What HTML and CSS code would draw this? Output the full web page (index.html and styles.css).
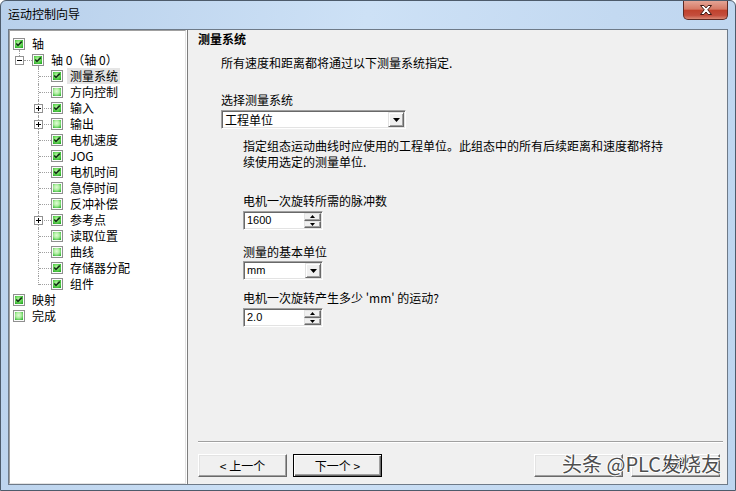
FILE: index.html
```html
<!DOCTYPE html>
<html lang="zh-CN">
<head>
<meta charset="utf-8">
<title>运动控制向导</title>
<link rel="stylesheet" href="styles.css">
</head>
<body>
<svg class="defs" aria-hidden="true">
  <defs>
    <radialGradient id="gOn" cx="45%" cy="40%" r="70%">
      <stop offset="0" stop-color="#c2f5ae"/>
      <stop offset="0.55" stop-color="#6ad95a"/>
      <stop offset="1" stop-color="#27aa27"/>
    </radialGradient>
    <radialGradient id="gOff" cx="45%" cy="40%" r="70%">
      <stop offset="0" stop-color="#e2fbd8"/>
      <stop offset="0.5" stop-color="#aeeea0"/>
      <stop offset="1" stop-color="#38b838"/>
    </radialGradient>
    <symbol id="cbOn" viewBox="0 0 12 12">
      <rect x=".5" y=".5" width="11" height="11" fill="#fbfbfb" stroke="#8f8f8f"/>
      <rect x="2" y="2" width="8" height="8" fill="url(#gOn)"/>
      <path d="M3.2 5.5 5 7.4 8.8 3.6" fill="none" stroke="#163418" stroke-width="1.6"/>
    </symbol>
    <symbol id="cbOff" viewBox="0 0 12 12">
      <rect x=".5" y=".5" width="11" height="11" fill="#fbfbfb" stroke="#8f8f8f"/>
      <rect x="2" y="2" width="8" height="8" fill="url(#gOff)"/>
    </symbol>
    <symbol id="expMinus" viewBox="0 0 9 9">
      <rect x=".5" y=".5" width="8" height="8" fill="#fff" stroke="#919191"/>
      <path d="M2 4.5h5" stroke="#000"/>
    </symbol>
    <symbol id="expPlus" viewBox="0 0 9 9">
      <rect x=".5" y=".5" width="8" height="8" fill="#fff" stroke="#919191"/>
      <path d="M2 4.5h5M4.5 2v5" stroke="#000"/>
    </symbol>
    <symbol id="triDown" viewBox="0 0 7 4">
      <path d="M0 0h7L3.5 4z" fill="#000"/>
    </symbol>
    <symbol id="triUpS" viewBox="0 0 5 3">
      <path d="M2.5 0 5 3H0z" fill="#000"/>
    </symbol>
    <symbol id="triDownS" viewBox="0 0 5 3">
      <path d="M0 0h5L2.5 3z" fill="#000"/>
    </symbol>
  </defs>
</svg>

<div class="window">
  <header class="titlebar">
    <div class="title">运动控制向导</div>
    <div class="close">
      <svg width="12" height="10" viewBox="0 0 12 10"><path d="M.5.5h3.4l2.1 2.4L8.1.5h3.4L7.8 4.8l3.7 4.7H8.1L6 7 3.9 9.5H.5l3.7-4.7z" fill="#fff" stroke="#3f1812" stroke-width="1" stroke-linejoin="round"/></svg>
    </div>
  </header>

  <div class="client">
    <nav class="tree-wrap">
      <ul class="tree">
        <li class="row l0 parent"><svg class="cb"><use href="#cbOn"/></svg><span class="lbl">轴</span></li>
        <li class="row l1"><svg class="slot"><use href="#expMinus"/></svg><svg class="cb"><use href="#cbOn"/></svg><span class="lbl">轴 0（轴 0）</span></li>
        <li class="row l2"><span class="slot"></span><svg class="cb"><use href="#cbOn"/></svg><span class="lbl sel">测量系统</span></li>
        <li class="row l2"><span class="slot"></span><svg class="cb"><use href="#cbOff"/></svg><span class="lbl">方向控制</span></li>
        <li class="row l2"><svg class="slot"><use href="#expPlus"/></svg><svg class="cb"><use href="#cbOn"/></svg><span class="lbl">输入</span></li>
        <li class="row l2"><svg class="slot"><use href="#expPlus"/></svg><svg class="cb"><use href="#cbOff"/></svg><span class="lbl">输出</span></li>
        <li class="row l2"><span class="slot"></span><svg class="cb"><use href="#cbOn"/></svg><span class="lbl">电机速度</span></li>
        <li class="row l2"><span class="slot"></span><svg class="cb"><use href="#cbOn"/></svg><span class="lbl">JOG</span></li>
        <li class="row l2"><span class="slot"></span><svg class="cb"><use href="#cbOn"/></svg><span class="lbl">电机时间</span></li>
        <li class="row l2"><span class="slot"></span><svg class="cb"><use href="#cbOff"/></svg><span class="lbl">急停时间</span></li>
        <li class="row l2"><span class="slot"></span><svg class="cb"><use href="#cbOff"/></svg><span class="lbl">反冲补偿</span></li>
        <li class="row l2"><svg class="slot"><use href="#expPlus"/></svg><svg class="cb"><use href="#cbOn"/></svg><span class="lbl">参考点</span></li>
        <li class="row l2"><span class="slot"></span><svg class="cb"><use href="#cbOff"/></svg><span class="lbl">读取位置</span></li>
        <li class="row l2"><span class="slot"></span><svg class="cb"><use href="#cbOff"/></svg><span class="lbl">曲线</span></li>
        <li class="row l2"><span class="slot"></span><svg class="cb"><use href="#cbOn"/></svg><span class="lbl">存储器分配</span></li>
        <li class="row l2 last"><span class="slot"></span><svg class="cb"><use href="#cbOn"/></svg><span class="lbl">组件</span></li>
        <li class="row l0"><svg class="cb"><use href="#cbOn"/></svg><span class="lbl">映射</span></li>
        <li class="row l0"><svg class="cb"><use href="#cbOff"/></svg><span class="lbl">完成</span></li>
      </ul>
    </nav>

    <main class="pane">
      <h1 class="hdr">测量系统</h1>
      <p class="intro">所有速度和距离都将通过以下测量系统指定.</p>

      <div class="lbl-sys">选择测量系统</div>
      <div class="combo combo-sys">
        <span class="val">工程单位</span>
        <span class="drop"><svg width="7" height="4"><use href="#triDown"/></svg></span>
      </div>

      <p class="desc">指定组态运动曲线时应使用的工程单位。此组态中的所有后续距离和速度都将持<br>续使用选定的测量单位.</p>

      <div class="flabel fl-pulse">电机一次旋转所需的脉冲数</div>
      <div class="spin">
        <span class="val num">1600</span>
        <span class="spinbtns">
          <span class="sb"><svg width="5" height="3"><use href="#triUpS"/></svg></span>
          <span class="sb"><svg width="5" height="3"><use href="#triDownS"/></svg></span>
        </span>
      </div>

      <div class="flabel fl-unit">测量的基本单位</div>
      <div class="combo combo-unit">
        <span class="val num">mm</span>
        <span class="drop"><svg width="7" height="4"><use href="#triDown"/></svg></span>
      </div>

      <div class="flabel fl-move">电机一次旋转产生多少 'mm' 的运动?</div>
      <div class="spin">
        <span class="val num">2.0</span>
        <span class="spinbtns">
          <span class="sb"><svg width="5" height="3"><use href="#triUpS"/></svg></span>
          <span class="sb"><svg width="5" height="3"><use href="#triDownS"/></svg></span>
        </span>
      </div>

      <div class="spacer"></div>
      <div class="sep"></div>

      <div class="btns">
        <button class="btn">&lt; 上一个</button>
        <button class="btn def">下一个 &gt;</button>
        <button class="btn right-first" aria-label="生成"></button>
        <button class="btn cancel">取消</button>
      </div>
    </main>
  </div>

  <div class="watermark">头条 @PLC发烧友</div>
</div>
</body>
</html>
```

FILE: styles.css
```css
* { box-sizing: border-box; }

html, body {
  margin: 0;
  padding: 0;
  background: #ffffff;
}

body {
  font: 12px/16px "Noto Sans CJK SC", "Noto Sans", sans-serif;
  color: #000;
}

.defs {
  position: absolute;
  width: 0;
  height: 0;
  overflow: hidden;
}

.window {
  position: relative;
  width: 736px;
  height: 491px;
  border: 1px solid #4d5b6b;
  border-radius: 6px 6px 0 0;
  background: linear-gradient(100deg, #b8d0eb 0%, #cde1f6 45%, #c3d9f1 75%, #bdd5ef 100%);
  display: flex;
  flex-direction: column;
  overflow: hidden;
}

.titlebar {
  height: 28px;
  flex: none;
  display: flex;
  align-items: flex-start;
  justify-content: space-between;
}

.title {
  margin: 5px 0 0 7px;
  font-size: 12px;
  line-height: 16px;
  color: #000;
}

.close {
  width: 45px;
  height: 19px;
  margin-right: 7px;
  border: 1px solid #5e2a24;
  border-top: none;
  border-radius: 0 0 5px 5px;
  background: linear-gradient(#e4a495 0%, #d67a66 45%, #c0422d 52%, #c44e3d 80%, #d98874 100%);
  display: flex;
  align-items: center;
  justify-content: center;
}

.client {
  flex: 1;
  min-height: 0;
  margin: 0 7px 5px 7px;
  border: 1px solid #6e7a88;
  display: flex;
}

/* ---------- tree ---------- */
.tree-wrap {
  width: 179px;
  flex: none;
  background: #fff;
  border-right: 1px solid #7d7d7d;
  display: flex;
}

.tree {
  flex: 1;
  margin: 0 1px 0 0;
  padding: 5px 0 0 0;
  list-style: none;
  border: 1px solid;
  border-color: #a0a0a0 #e3e3e3 #e3e3e3 #a0a0a0;
}

.row {
  position: relative;
  height: 16px;
  display: flex;
  align-items: center;
  white-space: nowrap;
}

.l0 { padding-left: 3px; }
.l1 { padding-left: 5px; }
.l2 { padding-left: 24px; }

.slot {
  width: 9px;
  height: 9px;
  flex: none;
  align-self: flex-start;
  margin: 4px 8px 0 0;
  position: relative;
  z-index: 1;
  display: block;
}

.cb {
  width: 12px;
  height: 12px;
  flex: none;
  display: block;
}

.lbl {
  margin-left: 4px;
  padding: 0 2px 0 3px;
  line-height: 16px;
}

.lbl.sel { background: #e5e5e5; }

/* connector lines */
.l0.parent::after {
  content: "";
  position: absolute;
  left: 9px;
  top: 14px;
  height: 6px;
  border-left: 1px dotted #a0a0a0;
}

.l1::before {
  content: "";
  position: absolute;
  left: 14px;
  top: 8px;
  width: 8px;
  border-top: 1px dotted #a0a0a0;
}

.l1::after {
  content: "";
  position: absolute;
  left: 28px;
  top: 14px;
  height: 2px;
  border-left: 1px dotted #a0a0a0;
}

.l2::before {
  content: "";
  position: absolute;
  left: 28px;
  top: 0;
  height: 16px;
  border-left: 1px dotted #a0a0a0;
}

.l2.last::before { height: 9px; }

.l2::after {
  content: "";
  position: absolute;
  left: 29px;
  top: 8px;
  width: 12px;
  border-top: 1px dotted #a0a0a0;
}

/* ---------- right pane ---------- */
.pane {
  flex: 1;
  min-width: 0;
  background: #f0f0f0;
  display: flex;
  flex-direction: column;
  padding: 1px 7px 7px 10px;
}

.hdr {
  margin: 0;
  font-size: 12px;
  font-weight: bold;
  line-height: 16px;
}

.intro {
  margin: 8px 0 0 23px;
}

.lbl-sys {
  margin: 21px 0 0 23px;
}

.combo,
.spin {
  height: 19px;
  display: flex;
  background: #fff;
  border: 1px solid;
  border-color: #a0a0a0 #ffffff #ffffff #a0a0a0;
  box-shadow: inset 1px 1px 0 #696969, inset -1px -1px 0 #e3e3e3;
  padding: 1px;
}

.combo-sys {
  width: 185px;
  margin: 2px 0 0 23px;
}

.val {
  flex: 1;
  line-height: 15px;
  padding-left: 2px;
  white-space: nowrap;
}

.num {
  font-family: "Liberation Sans", Arial, sans-serif;
  font-size: 11px;
}

.drop {
  width: 16px;
  height: 15px;
  flex: none;
  background: #f0f0f0;
  border: 1px solid;
  border-color: #e3e3e3 #696969 #696969 #e3e3e3;
  box-shadow: inset 1px 1px 0 #ffffff, inset -1px -1px 0 #a0a0a0;
  display: flex;
  align-items: center;
  justify-content: center;
}

.drop svg { display: block; }

.desc {
  margin: 9px 0 0 45px;
  white-space: nowrap;
}

.flabel {
  margin-left: 45px;
  white-space: nowrap;
}

.fl-pulse { margin-top: 23px; }
.fl-unit { margin-top: 14px; }
.fl-move { margin-top: 10px; }

.spin {
  width: 80px;
  margin: 2px 0 0 45px;
}

.combo-unit {
  width: 80px;
  margin: 1px 0 0 45px;
}

.spinbtns {
  width: 17px;
  flex: none;
  display: flex;
  flex-direction: column;
}

.sb {
  flex: 1;
  background: #f0f0f0;
  border: 1px solid;
  border-color: #e3e3e3 #696969 #696969 #e3e3e3;
  box-shadow: inset -1px -1px 0 #a0a0a0;
  display: flex;
  align-items: center;
  justify-content: center;
}

.sb svg { display: block; }

.spacer { flex: 1; }

.sep {
  height: 2px;
  margin-right: -3px;
  border-top: 1px solid #a0a0a0;
  border-bottom: 1px solid #ffffff;
}

.btns {
  margin-top: 11px;
  display: flex;
  gap: 6px;
}

.btn {
  width: 89px;
  height: 23px;
  padding: 0;
  font: 12px/16px "Noto Sans CJK SC", "Noto Sans", sans-serif;
  color: #000;
  background: #f0f0f0;
  border: 1px solid;
  border-color: #ffffff #696969 #696969 #ffffff;
  box-shadow: inset -1px -1px 0 #a0a0a0, inset 1px 1px 0 #e3e3e3;
}

.btn.def {
  border-color: #000;
  box-shadow: inset 1px 1px 0 #ffffff, inset -1px -1px 0 #696969, inset -2px -2px 0 #a0a0a0;
}

.btn.cancel {
  padding-bottom: 6px;
  line-height: 12px;
}

.right-first { margin-left: auto; margin-right: 2px; }

.watermark {
  position: absolute;
  left: 561px;
  top: 451px;
  font-size: 20px;
  line-height: 24px;
  color: #4e4e4e;
  text-shadow: 1px 0 0 #fff, -1px 0 0 #fff, 0 1px 0 #fff, 0 -1px 0 #fff;
  white-space: nowrap;
}
```
